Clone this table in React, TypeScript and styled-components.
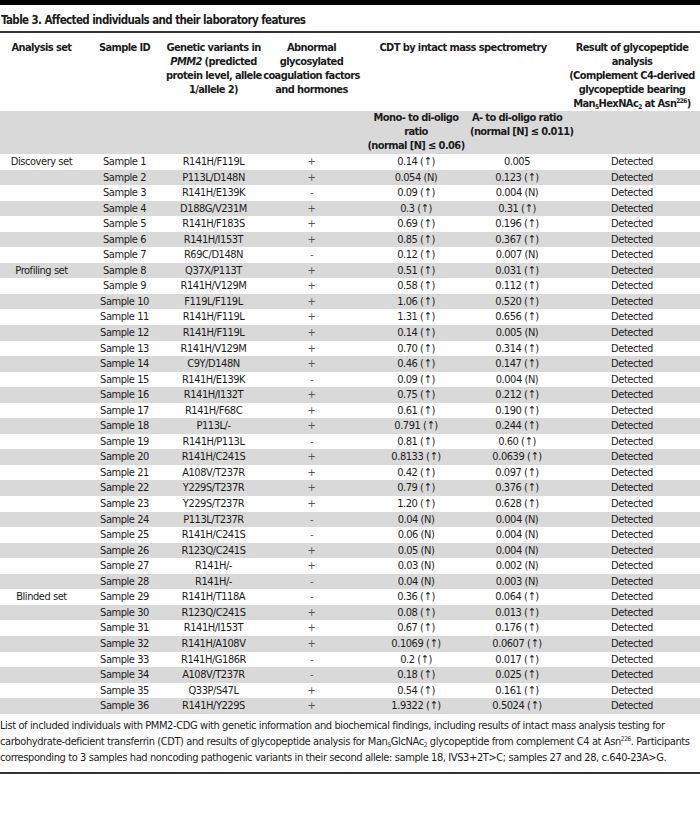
import React from "react";
import styled, { createGlobalStyle } from "styled-components";

const GlobalStyle = createGlobalStyle`
  html, body {
    margin: 0;
    padding: 0;
    background: #fff;
  }
  body {
    font-family: "DejaVu Sans Condensed", "Liberation Sans", sans-serif;
    color: #1c1c1c;
  }
`;

const Page = styled.div`
  width: 700px;
`;

const TopBar = styled.div`
  height: 5px;
  background: #000;
`;

const Title = styled.h1`
  margin: 0;
  padding: 7px 0 0 1px;
  height: 28px;
  box-sizing: border-box;
  font-size: 11.5px;
  font-weight: bold;
  letter-spacing: -0.6px;
  line-height: 16px;
  border-bottom: 2px solid #333;
`;

const Table = styled.table`
  width: 700px;
  border-collapse: collapse;
  table-layout: fixed;
  font-size: 11px;
  letter-spacing: -0.45px;
`;

const HeadCell = styled.th`
  vertical-align: top;
  text-align: center;
  white-space: nowrap;
  font-weight: bold;
  letter-spacing: -0.6px;
  line-height: 14px;
  padding: 8px 0 0;
`;

const SubHeadRow = styled.tr`
  background: #d9d9d9;
`;

const SubHeadCell = styled.th`
  vertical-align: top;
  text-align: center;
  white-space: nowrap;
  font-weight: bold;
  letter-spacing: -0.6px;
  line-height: 14px;
  padding: 0 0 1px;
`;

const Row = styled.tr<{ $shaded: boolean }>`
  background: ${(p) => (p.$shaded ? "#d9d9d9" : "#fff")};
`;

const Cell = styled.td<{ $muted?: boolean }>`
  text-align: center;
  white-space: nowrap;
  height: 15.55px;
  line-height: 15.55px;
  padding: 0;
  color: ${(p) => (p.$muted ? "#555" : "inherit")};
`;

const Note = styled.p`
  margin: 0;
  padding: 4px 0 6px;
  font-size: 11px;
  letter-spacing: -0.4px;
  line-height: 16px;
  border-bottom: 2px solid #333;
`;

const Low = styled.sub`
  font-size: 6.5px;
  vertical-align: -2px;
  line-height: 0;
`;

const High = styled.sup`
  font-size: 6.5px;
  vertical-align: 4px;
  line-height: 0;
`;

type Sample = [string, string, string, string, string];

const SETS: Record<number, string> = {
  1: "Discovery set",
  8: "Profiling set",
  29: "Blinded set",
};

const up = "(\u2191)";

const samples: Sample[] = [
  ["R141H/F119L", "+", `0.14 ${up}`, "0.005", "Detected"],
  ["P113L/D148N", "+", "0.054 (N)", `0.123 ${up}`, "Detected"],
  ["R141H/E139K", "-", `0.09 ${up}`, "0.004 (N)", "Detected"],
  ["D188G/V231M", "+", `0.3 ${up}`, `0.31 ${up}`, "Detected"],
  ["R141H/F183S", "+", `0.69 ${up}`, `0.196 ${up}`, "Detected"],
  ["R141H/I153T", "+", `0.85 ${up}`, `0.367 ${up}`, "Detected"],
  ["R69C/D148N", "-", `0.12 ${up}`, "0.007 (N)", "Detected"],
  ["Q37X/P113T", "+", `0.51 ${up}`, `0.031 ${up}`, "Detected"],
  ["R141H/V129M", "+", `0.58 ${up}`, `0.112 ${up}`, "Detected"],
  ["F119L/F119L", "+", `1.06 ${up}`, `0.520 ${up}`, "Detected"],
  ["R141H/F119L", "+", `1.31 ${up}`, `0.656 ${up}`, "Detected"],
  ["R141H/F119L", "+", `0.14 ${up}`, "0.005 (N)", "Detected"],
  ["R141H/V129M", "+", `0.70 ${up}`, `0.314 ${up}`, "Detected"],
  ["C9Y/D148N", "+", `0.46 ${up}`, `0.147 ${up}`, "Detected"],
  ["R141H/E139K", "-", `0.09 ${up}`, "0.004 (N)", "Detected"],
  ["R141H/I132T", "+", `0.75 ${up}`, `0.212 ${up}`, "Detected"],
  ["R141H/F68C", "+", `0.61 ${up}`, `0.190 ${up}`, "Detected"],
  ["P113L/-", "+", `0.791 ${up}`, `0.244 ${up}`, "Detected"],
  ["R141H/P113L", "-", `0.81 ${up}`, `0.60 ${up}`, "Detected"],
  ["R141H/C241S", "+", `0.8133 ${up}`, `0.0639 ${up}`, "Detected"],
  ["A108V/T237R", "+", `0.42 ${up}`, `0.097 ${up}`, "Detected"],
  ["Y229S/T237R", "+", `0.79 ${up}`, `0.376 ${up}`, "Detected"],
  ["Y229S/T237R", "+", `1.20 ${up}`, `0.628 ${up}`, "Detected"],
  ["P113L/T237R", "-", "0.04 (N)", "0.004 (N)", "Detected"],
  ["R141H/C241S", "-", "0.06 (N)", "0.004 (N)", "Detected"],
  ["R123Q/C241S", "+", "0.05 (N)", "0.004 (N)", "Detected"],
  ["R141H/-", "+", "0.03 (N)", "0.002 (N)", "Detected"],
  ["R141H/-", "-", "0.04 (N)", "0.003 (N)", "Detected"],
  ["R141H/T118A", "-", `0.36 ${up}`, `0.064 ${up}`, "Detected"],
  ["R123Q/C241S", "+", `0.08 ${up}`, `0.013 ${up}`, "Detected"],
  ["R141H/I153T", "+", `0.67 ${up}`, `0.176 ${up}`, "Detected"],
  ["R141H/A108V", "+", `0.1069 ${up}`, `0.0607 ${up}`, "Detected"],
  ["R141H/G186R", "-", `0.2 ${up}`, `0.017 ${up}`, "Detected"],
  ["A108V/T237R", "-", `0.18 ${up}`, `0.025 ${up}`, "Detected"],
  ["Q33P/S47L", "+", `0.54 ${up}`, `0.161 ${up}`, "Detected"],
  ["R141H/Y229S", "+", `1.9322 ${up}`, `0.5024 ${up}`, "Detected"],
];

const colWidths = [83, 83, 95, 101, 108, 94, 136];

const App: React.FC = () => {
  return (
    <Page>
      <GlobalStyle />
      <TopBar />
      <Title>Table 3. Affected individuals and their laboratory features</Title>
      <Table>
        <colgroup>
          {colWidths.map((w, i) => (
            <col key={i} style={{ width: w }} />
          ))}
        </colgroup>
        <thead>
          <tr>
            <HeadCell>Analysis set</HeadCell>
            <HeadCell>Sample ID</HeadCell>
            <HeadCell>
              Genetic variants in
              <br />
              <i>PMM2</i> (predicted
              <br />
              protein level, allele
              <br />
              1/allele 2)
            </HeadCell>
            <HeadCell>
              Abnormal
              <br />
              glycosylated
              <br />
              coagulation factors
              <br />
              and hormones
            </HeadCell>
            <HeadCell colSpan={2}>CDT by intact mass spectrometry</HeadCell>
            <HeadCell>
              Result of glycopeptide
              <br />
              analysis
              <br />
              (Complement C4-derived
              <br />
              glycopeptide bearing
              <br />
              Man<Low>5</Low>HexNAc<Low>2</Low> at Asn<High>226</High>)
            </HeadCell>
          </tr>
          <SubHeadRow>
            <SubHeadCell />
            <SubHeadCell />
            <SubHeadCell />
            <SubHeadCell />
            <SubHeadCell>
              Mono- to di-oligo
              <br />
              ratio
              <br />
              (normal [N] ≤ 0.06)
            </SubHeadCell>
            <SubHeadCell>
              A- to di-oligo ratio
              <br />
              (normal [N] ≤ 0.011)
            </SubHeadCell>
            <SubHeadCell />
          </SubHeadRow>
        </thead>
        <tbody>
          {samples.map((s, i) => {
            const n = i + 1;
            return (
              <Row key={n} $shaded={n % 2 === 0}>
                <Cell>{SETS[n] ?? ""}</Cell>
                <Cell>Sample {n}</Cell>
                <Cell>{s[0]}</Cell>
                <Cell $muted>{s[1]}</Cell>
                <Cell>{s[2]}</Cell>
                <Cell>{s[3]}</Cell>
                <Cell>{s[4]}</Cell>
              </Row>
            );
          })}
        </tbody>
      </Table>
      <Note>
        List of included individuals with PMM2-CDG with genetic information and
        biochemical findings, including results of intact mass analysis testing
        for
        <br />
        carbohydrate-deficient transferrin (CDT) and results of glycopeptide
        analysis for Man<Low>5</Low>GlcNAc<Low>2</Low> glycopeptide from
        complement C4 at Asn<High>226</High>. Participants
        <br />
        corresponding to 3 samples had noncoding pathogenic variants in their
        second allele: sample 18, IVS3+2T&gt;C; samples 27 and 28,
        c.640-23A&gt;G.
      </Note>
    </Page>
  );
};

export default App;
